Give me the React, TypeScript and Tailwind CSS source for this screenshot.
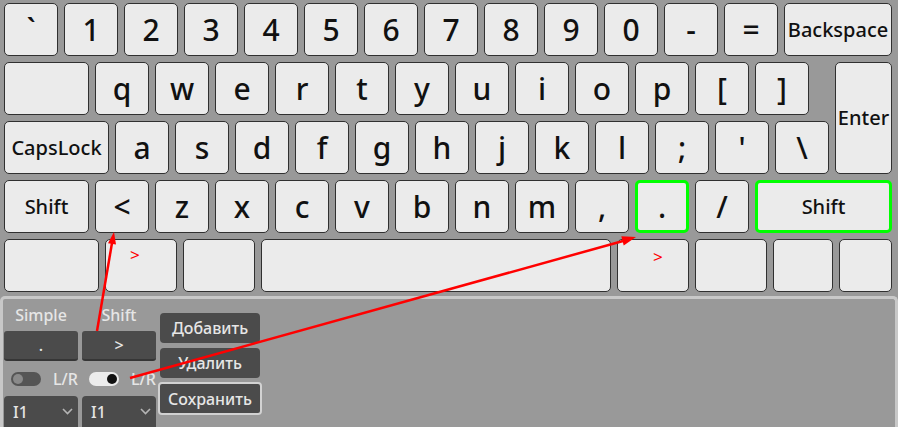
import React from "react";

type KeyProps = {
  label?: string;
  className?: string;
  big?: boolean;
  active?: boolean;
  children?: React.ReactNode;
};

const Key = ({ label, className = "w-[54px]", big = true, active, children }: KeyProps) => {
  return (
    <div
      className={`relative flex h-[53px] shrink-0 items-center justify-center rounded-[5px] bg-[#ebebeb] text-[#111] ${
        active ? "border-[3px] border-[#00ff00]" : "border border-[#303030]"
      } ${big ? "text-[30px]" : "text-[20px]"} ${className}`}
    >
      {label}
      {children}
    </div>
  );
};

const RedMark = ({ className }: { className: string }) => (
  <span className={`absolute text-[17px] font-normal leading-none text-[#ff0000] ${className}`}>&gt;</span>
);

const Toggle = ({ on }: { on?: boolean }) => (
  <div
    className={`flex h-[14px] w-[30px] items-center rounded-full px-[2px] ${
      on ? "justify-end bg-[#ececec]" : "justify-start bg-[#555555]"
    }`}
  >
    <div className={`h-[10px] w-[10px] rounded-full ${on ? "bg-[#111111]" : "bg-[#8a8a8a]"}`} />
  </div>
);

const Select = ({ value }: { value: string }) => (
  <div className="flex h-[31px] w-[74px] items-center justify-between rounded-t-[4px] bg-[#4b4b4b] pl-[9px] pr-[5px] text-[16px] text-[#e4e4e4]">
    <span>{value}</span>
    <svg width="11" height="7" viewBox="0 0 11 7" fill="none">
      <polyline points="1,1 5.5,5.5 10,1" stroke="#b5b5b5" strokeWidth="1.6" />
    </svg>
  </div>
);

const row1 = ["`", "1", "2", "3", "4", "5", "6", "7", "8", "9", "0", "-", "="];
const row2 = ["q", "w", "e", "r", "t", "y", "u", "i", "o", "p", "[", "]"];
const row3 = ["a", "s", "d", "f", "g", "h", "j", "k", "l", ";", "'", "\\"];
const row4 = ["<", "z", "x", "c", "v", "b", "n", "m", ","];

export default function App() {
  return (
    <div className="relative h-[427px] w-[898px] overflow-hidden bg-[#999999] font-['Noto_Sans',sans-serif] font-medium">
      {/* keyboard */}
      <div className="flex flex-col gap-[6px] pl-[4px] pt-[3px]">
        <div className="flex gap-[6px]">
          {row1.map((k) => (
            <Key key={k} label={k} />
          ))}
          <Key label="Backspace" big={false} className="w-[108px]" />
        </div>
        <div className="flex gap-[6px]">
          <div className="flex flex-col gap-[6px]">
            <div className="flex gap-[6px]">
              <Key className="w-[85px]" />
              {row2.map((k) => (
                <Key key={k} label={k} />
              ))}
            </div>
            <div className="flex gap-[6px]">
              <Key label="CapsLock" big={false} className="w-[105px]" />
              {row3.map((k) => (
                <Key key={k} label={k} />
              ))}
            </div>
          </div>
          <div className="flex h-[112px] w-[57px] items-center justify-center rounded-[5px] border border-[#303030] bg-[#ebebeb] text-[20px] text-[#111]">
            Enter
          </div>
        </div>
        <div className="flex gap-[6px]">
          <Key label="Shift" big={false} className="w-[85px]" />
          {row4.map((k) => (
            <Key key={k} label={k} />
          ))}
          <Key label="." active />
          <Key label="/" />
          <Key label="Shift" big={false} active className="w-[137px]" />
        </div>
        <div className="flex gap-[6px]">
          <Key className="w-[95px]" />
          <Key className="w-[72px]">
            <RedMark className="left-[24px] top-[6px]" />
          </Key>
          <Key className="w-[72px]" />
          <Key className="w-[350px]" />
          <Key className="w-[72px]">
            <RedMark className="left-[35px] top-[8px]" />
          </Key>
          <Key className="w-[72px]" />
          <Key className="w-[60px]" />
          <Key className="w-[53px]" />
        </div>
      </div>

      {/* settings panel */}
      <div className="mt-[4px] h-[131px] rounded-t-[5px] border-[3px] border-b-0 border-[#c8c8c8] pl-[1px] text-[16px] text-[#e6e6e6]">
        <div className="flex">
          <div className="flex flex-col">
            <div className="flex h-[32px] gap-[4px]">
              <div className="flex w-[74px] items-center justify-center">Simple</div>
              <div className="flex w-[74px] items-center justify-center">Shift</div>
            </div>
            <div className="flex gap-[4px]">
              <div className="flex h-[30px] w-[74px] items-center justify-center rounded-[3px] border-b-2 border-[#363636] bg-[#4b4b4b]">
                .
              </div>
              <div className="flex h-[30px] w-[74px] items-center justify-center rounded-[3px] border-b-2 border-[#363636] bg-[#4b4b4b]">
                &gt;
              </div>
            </div>
            <div className="flex h-[35px] items-center gap-[4px]">
              <div className="flex w-[74px] items-center gap-[12px] pl-[7px]">
                <Toggle />
                <span>L/R</span>
              </div>
              <div className="flex w-[74px] items-center gap-[12px] pl-[7px]">
                <Toggle on />
                <span>L/R</span>
              </div>
            </div>
            <div className="flex gap-[4px]">
              <Select value="I1" />
              <Select value="I1" />
            </div>
          </div>
          <div className="ml-[2px] mt-[14px] flex w-[104px] flex-col items-center">
            <div className="flex h-[30px] w-[100px] items-center justify-center rounded-[4px] bg-[#4b4b4b]">
              Добавить
            </div>
            <div className="mt-[5px] flex h-[30px] w-[100px] items-center justify-center rounded-[4px] bg-[#4b4b4b]">
              Удалить
            </div>
            <div className="mt-[4px] flex h-[33px] w-[104px] items-center justify-center rounded-[4px] border-2 border-[#d2d2d2] bg-[#4b4b4b]">
              Сохранить
            </div>
          </div>
        </div>
      </div>

      {/* red annotation arrows */}
      <svg className="pointer-events-none absolute left-0 top-0" width="898" height="427" viewBox="0 0 898 427">
        <line x1="97" y1="331" x2="112" y2="243" stroke="#ff0000" strokeWidth="2.5" />
        <polygon points="114,232 116,244.5 108,243.2" fill="#ff0000" />
        <line x1="130" y1="378" x2="623" y2="241" stroke="#ff0000" strokeWidth="2.5" />
        <polygon points="636,237 623.7,245.5 621.3,236.2" fill="#ff0000" />
      </svg>
    </div>
  );
}
